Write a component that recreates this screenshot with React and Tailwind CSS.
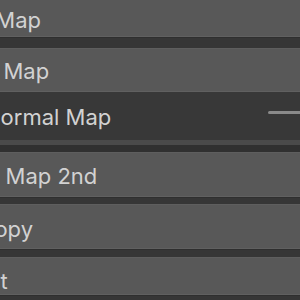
import React from "react";

const Btn = ({ label, shift, h = "h-[44px]", extra = "", pad = "pt-[3px]" }) => (
    <div className={`${h} ${extra} ${pad} shrink-0 bg-[#585858] border-t border-[#5e5e5e] border-b border-b-[#606060] flex items-center overflow-hidden`}>
        <span className="whitespace-nowrap text-[22px] text-[#d2d2d2]" style={{ marginLeft: shift }}>{label}</span>
    </div>
);

const Gap = ({ h }) => <div className={`${h} shrink-0 bg-[#363636] border-t border-[#2f2f2f]`} />;

export default function App() {
    return (
        <div className="w-[300px] h-[300px] overflow-hidden bg-[#383838] flex flex-col" style={{ fontFamily: "Inter, 'Noto Sans', sans-serif" }}>
            <Btn label="Bump Map" shift={-71} extra="-mt-[7px]" pad="pt-[11px]" />
            <Gap h="h-[11px]" />
            <Btn label="AO Map" shift={-34} />

            <div className="h-[48px] pt-[3px] shrink-0 bg-[#383838] flex items-center justify-between overflow-hidden">
                <span className="whitespace-nowrap text-[22px] text-[#d2d2d2] -ml-[16px]">Normal Map</span>
                <div className="w-[32px] h-[3px] rounded-l-full bg-[#8a8a8a] -mt-[10px]" />
            </div>
            <div className="h-[5px] shrink-0 bg-[#4a4a4a]" />
            <div className="h-[7px] shrink-0 bg-[#303030]" />

            <Btn label="Normal Map 2nd" shift={-76} h="h-[45px]" />
            <Gap h="h-[7px]" />
            <Btn label="Anisotropy" shift={-79} h="h-[45px]" pad="pt-[5px]" />
            <Gap h="h-[8px]" />
            <Btn label="Backlight" shift={-88} h="h-[38px]" pad="pt-[11px]" />
            <Gap h="h-[8px]" />
        </div>
    );
}
